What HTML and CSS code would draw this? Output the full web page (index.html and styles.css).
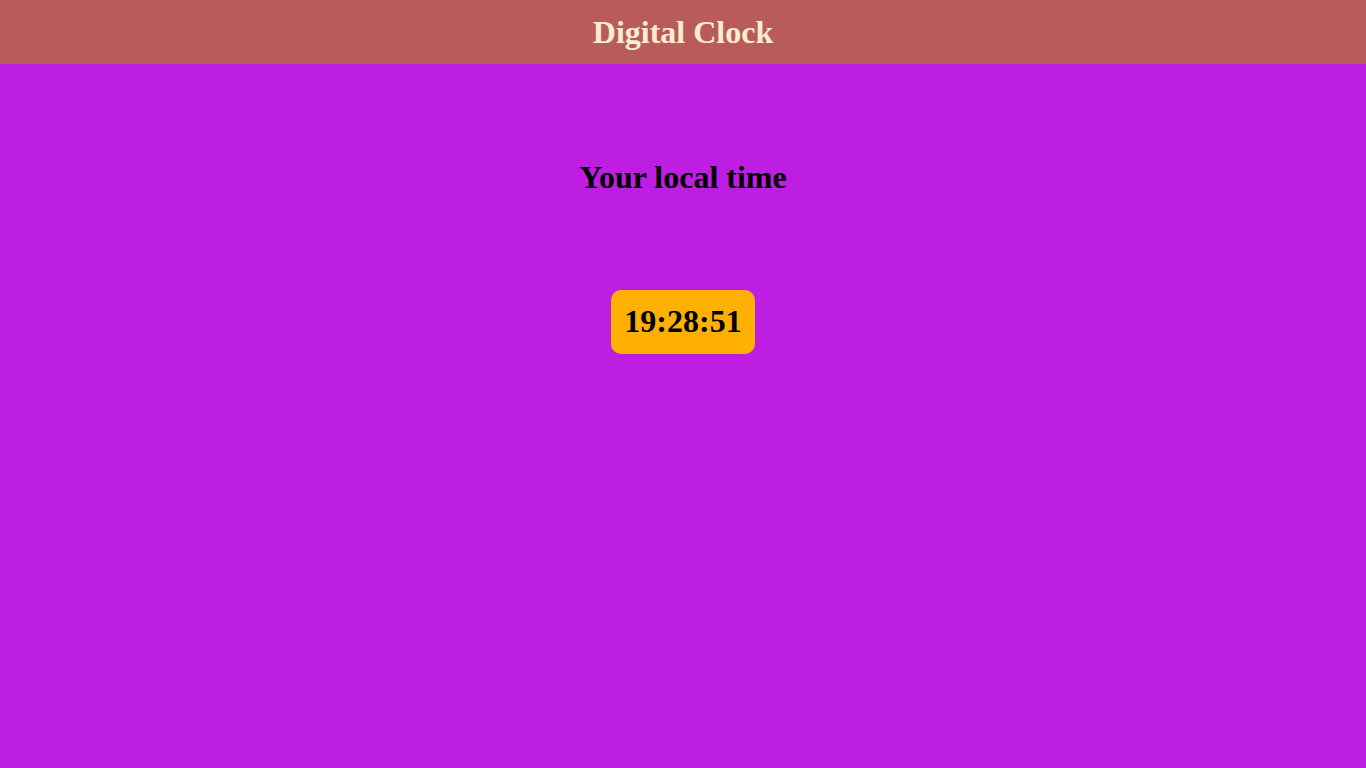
FILE: index.html
```html
<!DOCTYPE html>
<html lang="en">
<head>
  <meta charset="utf-8">
  <meta name="viewport" content="width=device-width, initial-scale=1">
  <title>Digital Clock</title>
  <link rel="stylesheet" href="styles.css">
</head>
<body class="page">
  <header class="banner">
    <h1 class="banner-title">Digital Clock</h1>
  </header>
  <main class="clock">
    <h2 class="clock-label">Your local time</h2>
    <time class="clock-time" datetime="19:28:51">19:28:51</time>
  </main>
</body>
</html>
```

FILE: styles.css
```css
.page {
  margin: 0;
  min-height: 100vh;
  background: #be1de2;
  color: #000;
  font-family: "Liberation Serif", "Times New Roman", serif;
  font-size: 32px;
  font-weight: bold;
  line-height: 36px;
}

.banner {
  padding: 14px;
  background: #ba5b5b;
  color: #faedcf;
  text-align: center;
}

.banner-title,
.clock-label {
  margin: 0;
  font-size: 32px;
}

.clock {
  display: flex;
  flex-direction: column;
  align-items: center;
  gap: 95px;
  padding-top: 95px;
}

.clock-time {
  box-sizing: border-box;
  min-width: 144px;
  padding: 13px 13px 15px;
  border-radius: 10px;
  background: #ffb000;
  text-align: center;
}
```
